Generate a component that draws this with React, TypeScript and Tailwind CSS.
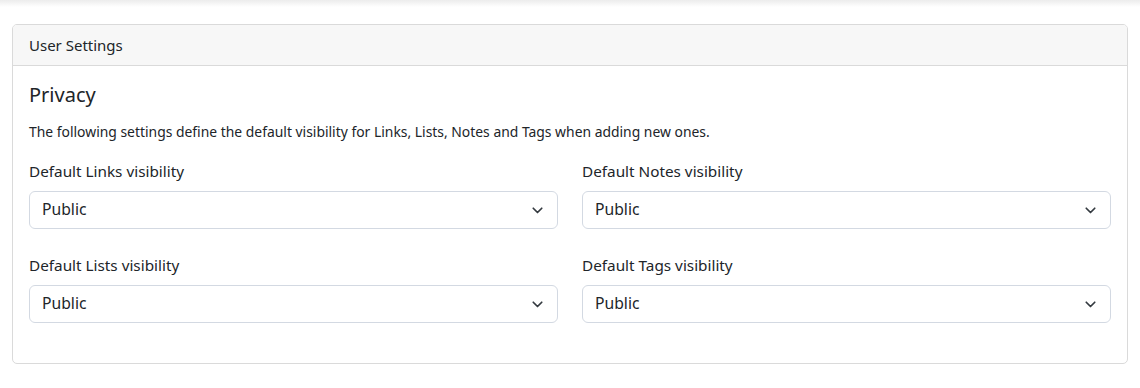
const FIELDS = [
  { label: 'Default Links visibility', value: 'Public' },
  { label: 'Default Notes visibility', value: 'Public' },
  { label: 'Default Lists visibility', value: 'Public' },
  { label: 'Default Tags visibility', value: 'Public' },
]

function Chevron() {
  return (
    <svg width="11" height="7" viewBox="0 0 11 7" fill="none" className="shrink-0">
      <path d="M1.25 1.25 5.5 5.5l4.25-4.25" stroke="#343a40" strokeWidth="1.7" strokeLinecap="round" strokeLinejoin="round" />
    </svg>
  )
}

export default function App() {
  return (
    <div className="min-h-screen bg-white text-[#212529] font-['Noto_Sans',sans-serif]">
      {/* navbar shadow bleeding in from above */}
      <div className="h-[7px] bg-gradient-to-b from-[#ececec] to-white" />

      <div className="mx-3 mt-[17px] border border-[#dadada] rounded-[5px] overflow-hidden">
        <div className="h-[41px] px-4 flex items-center bg-[#f7f7f7] border-b border-[#dadada] text-[15px]">
          User Settings
        </div>

        <div className="px-4 pt-[17px] pb-10">
          <h5 className="text-[20px] leading-[24px]">Privacy</h5>
          <p className="mt-[15px] text-[13.9px] leading-[20px]">
            The following settings define the default visibility for Links, Lists, Notes and Tags when adding new ones.
          </p>

          <div className="mt-[18px] grid grid-cols-2 gap-x-6 gap-y-[25px]">
            {FIELDS.map((f) => (
              <div key={f.label}>
                <label className="block text-[15.3px] leading-[22px] mb-[9px]">{f.label}</label>
                <div className="h-[38px] pl-3 pr-[14px] flex items-center justify-between border border-[#d3d9e2] rounded-md bg-white text-[15.7px]">
                  <span>{f.value}</span>
                  <Chevron />
                </div>
              </div>
            ))}
          </div>
        </div>
      </div>
    </div>
  )
}
